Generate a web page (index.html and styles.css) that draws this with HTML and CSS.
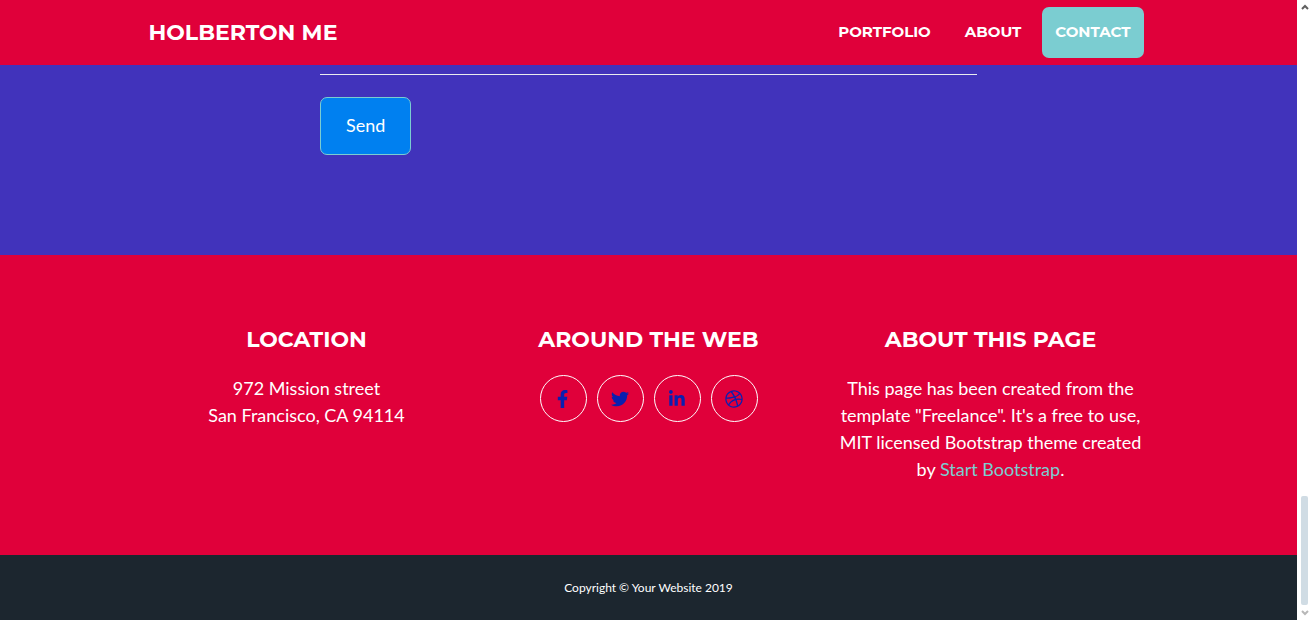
FILE: index.html
```html
<!DOCTYPE html>
<html lang="en">
<head>
<meta charset="utf-8">
<meta name="viewport" content="width=device-width, initial-scale=1">
<title>Holberton Me</title>
<link rel="stylesheet" href="styles.css">
</head>
<body>
<div class="page">
  <header class="navbar">
    <div class="container navbar-inner">
      <a class="brand" href="#top">HOLBERTON ME</a>
      <nav class="nav">
        <a class="nav-link" href="#portfolio">PORTFOLIO</a>
        <a class="nav-link" href="#about">ABOUT</a>
        <a class="nav-link active" href="#contact">CONTACT</a>
      </nav>
    </div>
  </header>
  <main class="contact" id="contact">
    <form class="contact-form">
      <button class="send" type="button">Send</button>
    </form>
  </main>
  <footer class="footer">
    <div class="container columns">
      <section class="column">
        <h2 class="title">LOCATION</h2>
        <p class="text">972 Mission street<br>San Francisco, CA 94114</p>
      </section>
      <section class="column">
        <h2 class="title">AROUND THE WEB</h2>
        <div class="socials">
          <a class="social" href="#facebook" aria-label="Facebook"><svg class="icon" viewBox="0 0 320 512"><path d="M279.14 288l14.22-92.66h-88.91v-60.13c0-25.35 12.42-50.06 52.24-50.06h40.42V6.26S260.43 0 225.36 0c-73.22 0-121.08 44.38-121.08 124.72v70.62H22.89V288h81.39v224h100.17V288z"/></svg></a>
          <a class="social" href="#twitter" aria-label="Twitter"><svg class="icon" viewBox="0 0 512 512"><path d="M459.37 151.716c.325 4.548.325 9.097.325 13.645 0 138.72-105.583 298.558-298.558 298.558-59.452 0-114.68-17.219-161.137-47.106 8.447.974 16.568 1.299 25.34 1.299 49.055 0 94.213-16.568 130.274-44.832-46.132-.975-84.792-31.188-98.112-72.772 6.498.974 12.995 1.624 19.818 1.624 9.421 0 18.843-1.3 27.614-3.573-48.081-9.747-84.143-51.98-84.143-102.985v-1.299c13.969 7.797 30.214 12.67 47.431 13.319-28.264-18.843-46.781-51.005-46.781-87.391 0-19.492 5.197-37.36 14.294-52.954 51.655 63.675 129.3 105.258 216.365 109.807-1.624-7.797-2.599-15.918-2.599-24.04 0-57.828 46.782-104.934 104.934-104.934 30.213 0 57.502 12.67 76.67 33.137 23.715-4.548 46.456-13.32 66.599-25.34-7.798 24.366-24.366 44.833-46.132 57.827 21.117-2.273 41.584-8.122 60.426-16.243-14.292 20.791-32.161 39.308-52.628 54.253z"/></svg></a>
          <a class="social" href="#linkedin" aria-label="LinkedIn"><svg class="icon" viewBox="0 0 448 512"><path d="M100.28 448H7.4V148.9h92.88zM53.79 108.1C24.09 108.1 0 83.5 0 53.8a53.79 53.79 0 0 1 107.58 0c0 29.7-24.1 54.3-53.79 54.3zM447.9 448h-92.68V302.4c0-34.7-.7-79.2-48.29-79.2-48.29 0-55.69 37.7-55.69 76.7V448h-92.78V148.9h89.08v40.8h1.3c12.4-23.5 42.69-48.3 87.88-48.3 94 0 111.28 61.9 111.28 142.3V448z"/></svg></a>
          <a class="social" href="#dribbble" aria-label="Dribbble"><svg class="icon" viewBox="0 0 512 512"><path d="M256 8C119.252 8 8 119.252 8 256s111.252 248 248 248 248-111.252 248-248S392.748 8 256 8zm163.97 114.366c29.503 36.046 47.369 81.957 47.835 131.955-6.984-1.477-77.018-15.682-147.502-6.818-5.752-14.041-11.181-26.393-18.617-41.614 78.321-31.977 113.818-77.482 118.284-83.523zM396.421 97.87c-3.81 5.427-35.697 48.286-111.021 76.519-34.712-63.776-73.185-116.168-79.04-124.008 67.176-16.193 137.966 1.27 190.061 47.489zm-230.48-33.25c5.585 7.659 43.438 60.116 78.537 122.509-99.087 26.313-186.36 25.934-195.834 25.809C62.38 147.205 106.678 92.573 165.941 64.62zM44.17 256.323c0-2.166.043-4.322.108-6.473 9.268.19 111.92 1.513 217.706-30.146 6.064 11.868 11.857 23.915 17.174 35.949-76.599 21.575-146.194 83.527-180.531 142.306C64.794 360.405 44.17 310.73 44.17 256.323zm81.807 167.113c22.127-45.233 82.178-103.622 167.579-132.756 29.74 77.283 42.039 142.053 45.189 160.638-68.112 29.013-150.015 21.053-212.768-27.882zm248.38 8.489c-2.171-12.886-13.446-74.897-41.152-151.033 66.38-10.626 124.7 6.768 131.947 9.055-9.442 58.941-43.273 109.844-90.795 141.978z"/></svg></a>
        </div>
      </section>
      <section class="column">
        <h2 class="title">ABOUT THIS PAGE</h2>
        <p class="text">This page has been created from the template "Freelance". It's a free to use, MIT licensed Bootstrap theme created by <a class="link" href="#start-bootstrap">Start Bootstrap</a>.</p>
      </section>
    </div>
  </footer>
  <div class="copyright"><small class="copyright-text">Copyright © Your Website 2019</small></div>
</div>
<div class="scrollbar" aria-hidden="true">
  <svg class="arrow arrow-up" viewBox="0 0 8 6"><path d="M1 5l3-3 3 3"/></svg>
  <div class="thumb"></div>
  <svg class="arrow arrow-down" viewBox="0 0 8 6"><path d="M1 1l3 3 3-3"/></svg>
</div>
</body>
</html>
```
FILE: styles.css
```css
* { box-sizing: border-box; }

body {
  display: flex;
  min-height: 100vh;
  margin: 0;
  background: #fff;
  color: #fff;
  font: 18px/27px Lato, sans-serif;
}

.page {
  display: flex;
  flex: 1;
  flex-direction: column;
  min-width: 0;
}

.container {
  width: 100%;
  max-width: 1026px;
  margin: 0 auto;
}

.navbar { background: #e0003a; }

.navbar-inner {
  display: flex;
  flex-wrap: wrap;
  align-items: center;
  justify-content: space-between;
  padding: 7px 18px 7px 13px;
}

.brand,
.nav-link {
  color: #fff;
  font-family: Montserrat, Inter, sans-serif;
  font-weight: 700;
  text-decoration: none;
}

.brand { font-size: 22px; }

.nav {
  display: flex;
  gap: 8px;
}

.nav-link {
  padding: 11px 13px 13px;
  border-radius: 7px;
  font-size: 15px;
}

.nav-link.active { background: #7bcdd1; }

.contact {
  padding: 9px 14px 100px;
  background: #4133bb;
}

.contact-form {
  max-width: 657px;
  margin: 0 auto;
  padding-top: 22px;
  border-top: 1px solid #e9ecef;
}

.send {
  display: block;
  padding: 14px 25px 16px;
  border: 1px solid #7bcdd1;
  border-radius: 7px;
  background: #0080f0;
  color: #fff;
  font: 18px/26px Lato, sans-serif;
}

.footer {
  flex: 1;
  padding: 72px 0;
  background: #e0003a;
  text-align: center;
}

.columns {
  display: grid;
  grid-template-columns: repeat(3, 1fr);
}

.column { padding: 0 14px; }

.title {
  margin: 0 0 22px;
  font: 700 22px/26px Montserrat, Inter, sans-serif;
}

.text { margin: 0; }

.link {
  color: #7bcdd1;
  text-decoration: none;
}

.socials {
  display: flex;
  justify-content: center;
  gap: 10px;
}

.social {
  display: flex;
  align-items: center;
  justify-content: center;
  width: 47px;
  height: 47px;
  border: 1px solid #fff;
  border-radius: 50%;
}

.icon {
  height: 18px;
  fill: #0a1fb0;
}

.copyright {
  padding: 22px 14px;
  background: #1c262f;
  text-align: center;
}

.copyright-text {
  display: block;
  font-size: 12px;
  line-height: 21px;
}

.scrollbar {
  display: flex;
  flex-direction: column;
  align-items: center;
  width: 15px;
  padding: 4px 0;
}

.arrow {
  width: 8px;
  height: 6px;
  fill: none;
  stroke: #606060;
  stroke-width: 2;
}

.arrow-down { stroke: #b8b8b8; }

.thumb {
  width: 7px;
  height: 109px;
  margin: auto 0 5px;
  border-radius: 2px;
  background: #d0dce4;
}
```
